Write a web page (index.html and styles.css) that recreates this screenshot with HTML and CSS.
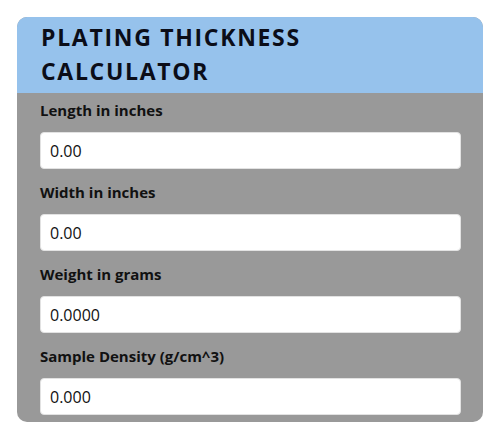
FILE: index.html
```html
<!DOCTYPE html>
<html>

<head>
    <meta charset="UTF-8">
    <meta name="viewport" content="width=device-width, initial-scale=1">
    <link rel="stylesheet" href="styles.css">
    <title>Plating Thickness Calculator</title>
</head>

<body>
    <div class="calculator">
        <h1 class="calc-title">Plating Thickness Calculator</h1>
        <div class="calc-body">
            <div class="field">
                <label for="lengthInput">Length in inches</label>
                <input type="text" id="lengthInput" name="lengthInput" value="0.00" />
            </div>
            <div class="field">
                <label for="widthInput">Width in inches</label>
                <input type="text" id="widthInput" name="widthInput" value="0.00" />
            </div>
            <div class="field">
                <label for="weightInput">Weight in grams</label>
                <input type="text" id="weightInput" name="weightInput" value="0.0000" />
            </div>
            <div class="field">
                <label for="densityInput">Sample Density (g/cm^3)</label>
                <input type="text" id="densityInput" name="densityInput" value="0.000" />
            </div>
        </div>
    </div>
</body>

</html>
```

FILE: styles.css
```css
* {
    box-sizing: border-box;
}

body {
    margin: 0;
    padding: 17px;
    background: #fff;
    font-family: "Open Sans", "Liberation Sans", sans-serif;
    color: #111;
}

.calculator {
    border-radius: 10px;
    overflow: hidden;
    background: #999999;
}

.calc-title {
    margin: 0;
    padding: 3px 24px 5px;
    background: #96c2ec;
    color: #0b0d18;
    font-size: 23px;
    line-height: 34px;
    font-weight: 700;
    letter-spacing: 1.7px;
    text-transform: uppercase;
}

.calc-body {
    display: flex;
    flex-direction: column;
    gap: 13px;
    padding: 7px 22px 7px 23px;
}

.field {
    display: flex;
    flex-direction: column;
    gap: 12px;
}

.field label {
    font-size: 15px;
    line-height: 20px;
    font-weight: 700;
    color: #111;
}

.field input {
    height: 37px;
    width: 100%;
    padding: 0 9px;
    border: 1px solid #e2e2e2;
    border-radius: 4px;
    background: #fff;
    font-family: inherit;
    font-size: 16px;
    color: #111;
}
```
